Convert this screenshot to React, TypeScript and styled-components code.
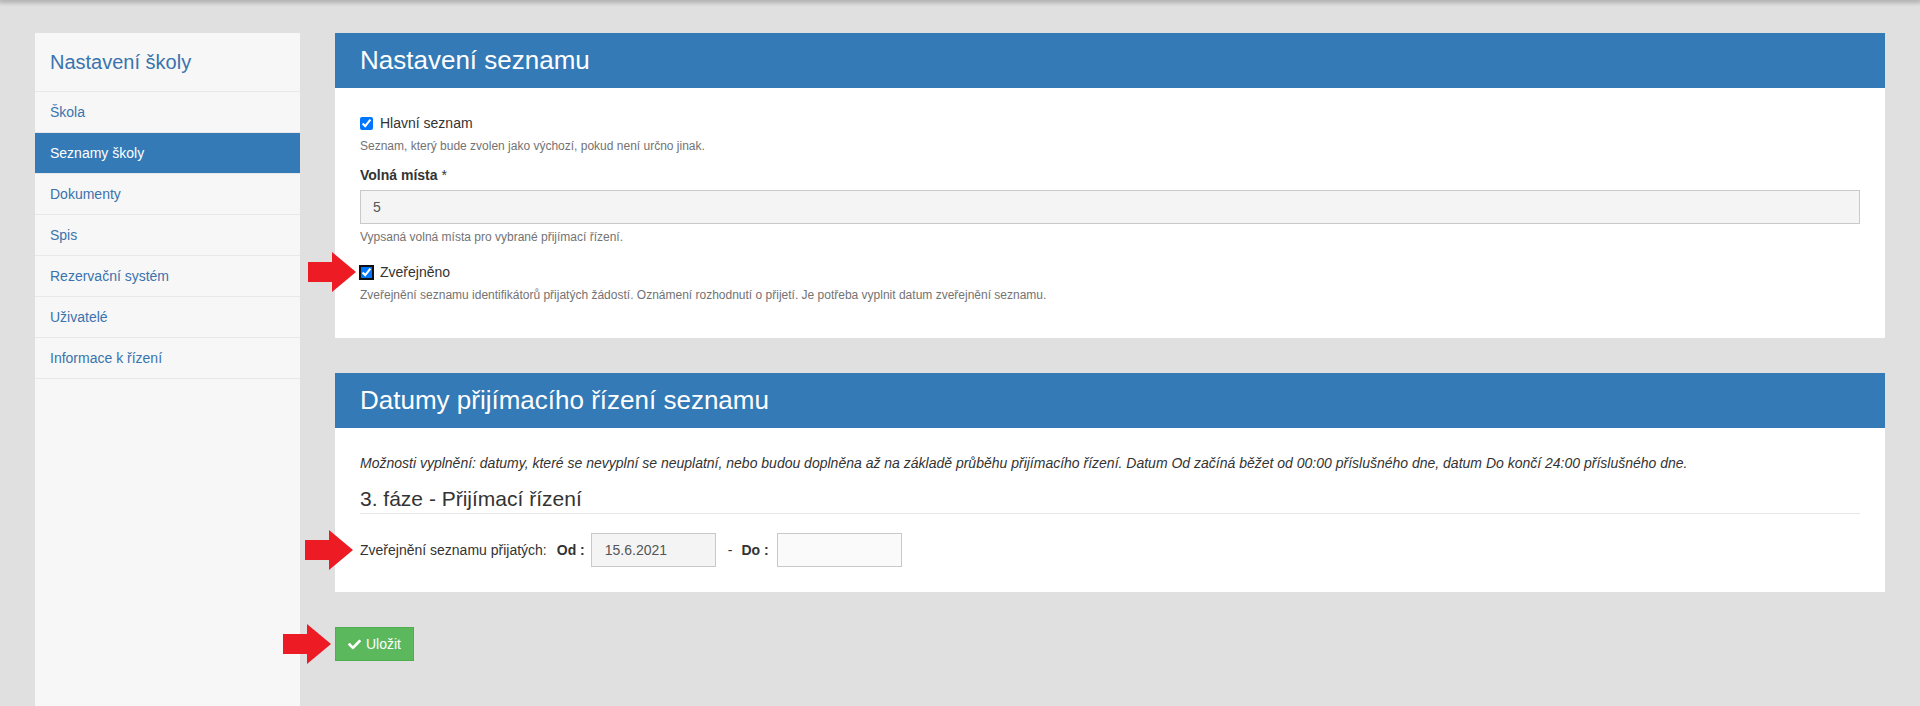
import React from 'react';
import styled, { createGlobalStyle } from 'styled-components';
import { FaCheck } from 'react-icons/fa';

const GlobalStyle = createGlobalStyle`
  html, body {
    margin: 0;
    padding: 0;
  }
  body {
    background: #e0e0e0;
    font-family: "Liberation Sans", Arial, Helvetica, sans-serif;
    font-size: 14px;
    color: #333;
  }
  *, *::before, *::after {
    box-sizing: border-box;
  }
`;

const Shell = styled.div`
  display: flex;
  flex-direction: column;
  min-height: 100vh;
`;

// shadow left by the navbar above the screenshot
const TopShade = styled.div`
  height: 0;
  box-shadow: 0 0 5px 2px rgba(0, 0, 0, 0.32);
`;

const Layout = styled.div`
  flex: 1;
  display: flex;
  gap: 35px;
  padding: 33px 35px 0;
`;

const Sidebar = styled.nav`
  width: 265px;
  flex-shrink: 0;
  background: #f7f7f7;
`;

const SidebarTitle = styled.div`
  height: 59px;
  display: flex;
  align-items: center;
  padding: 0 15px;
  border-bottom: 1px solid #e8e8e8;
  font-size: 20px;
  color: #3a73ad;
`;

const NavItem = styled.a<{ $active?: boolean }>`
  display: flex;
  align-items: center;
  height: 41px;
  padding: 0 15px;
  border-bottom: 1px solid #e8e8e8;
  font-size: 14px;
  text-decoration: none;
  color: ${(p) => (p.$active ? '#fff' : '#3a73ad')};
  background: ${(p) => (p.$active ? '#337ab7' : 'transparent')};
`;

const Main = styled.main`
  flex: 1;
  display: flex;
  flex-direction: column;
  gap: 35px;
`;

const Panel = styled.section`
  background: #fff;
`;

const PanelHeader = styled.h3`
  margin: 0;
  height: 55px;
  line-height: 55px;
  padding: 0 25px;
  background: #337ab7;
  color: #fff;
  font-size: 26px;
  font-weight: normal;
`;

const PanelBody = styled.div`
  padding: 25px;
`;

const CheckRow = styled.label<{ $mt?: number }>`
  position: relative;
  display: flex;
  align-items: center;
  height: 20px;
  margin-top: ${(p) => p.$mt || 0}px;
  font-size: 14px;
  color: #333;
`;

const Checkbox = styled.input<{ $focused?: boolean }>`
  width: 13px;
  height: 13px;
  margin: 0 7px 0 0;
  accent-color: #0075ff;
  ${(p) =>
    p.$focused &&
    `
    outline: 2px solid #111;
    outline-offset: -1px;
    border-radius: 2px;
  `}
`;

const HelpText = styled.div<{ $mb?: number }>`
  margin-top: 5px;
  margin-bottom: ${(p) => p.$mb || 0}px;
  font-size: 12px;
  line-height: 17px;
  color: #737373;
`;

const FieldLabel = styled.div`
  margin-top: 10px;
  margin-bottom: 5px;
  line-height: 20px;
  font-weight: bold;
  color: #333;
`;

const Required = styled.span`
  font-weight: normal;
  color: #333;
`;

const TextInput = styled.input`
  display: block;
  width: 100%;
  height: 34px;
  padding: 0 12px;
  border: 1px solid #c9c9c9;
  border-radius: 0;
  background: #f4f4f4;
  font-family: inherit;
  font-size: 14px;
  color: #555;
`;

const Note = styled.p`
  margin: 0;
  line-height: 20px;
  font-style: italic;
  color: #333;
`;

const PhaseTitle = styled.h4`
  margin: 14px 0 0;
  padding-bottom: 2px;
  border-bottom: 1px solid #e6e6e6;
  font-size: 21px;
  line-height: 24px;
  font-weight: normal;
  color: #333;
`;

const DateRow = styled.div`
  position: relative;
  display: flex;
  align-items: center;
  height: 34px;
  margin-top: 19px;
  color: #333;
`;

const FromKey = styled.b`
  margin-left: 10px;
  margin-right: 6px;
`;

const ToKey = styled.b`
  margin-right: 8px;
`;

const Dash = styled.span`
  margin-left: 12px;
  margin-right: 9px;
`;

const DateInput = styled.input<{ $filled?: boolean }>`
  width: 125px;
  height: 34px;
  padding: 0 13px;
  border: 1px solid #c9c9c9;
  border-radius: 0;
  background: ${(p) => (p.$filled ? '#f4f4f4' : '#fafafa')};
  font-family: inherit;
  font-size: 14px;
  color: #555;
`;

const Actions = styled.div`
  position: relative;
  display: flex;
`;

const SaveButton = styled.button`
  display: flex;
  align-items: center;
  gap: 5px;
  height: 34px;
  padding: 0 12px;
  border: 1px solid #4cae4c;
  border-radius: 0;
  background: #5cb85c;
  color: #fff;
  font-family: inherit;
  font-size: 14px;
`;

const ArrowSvg = styled.svg<{ $left: number }>`
  position: absolute;
  top: 50%;
  left: ${(p) => p.$left}px;
  transform: translateY(-50%);
`;

function Arrow({ left }: { left: number }) {
  return (
    <ArrowSvg $left={left} width="48" height="40" viewBox="0 0 48 40">
      <polygon points="0,10 24,10 24,0 48,20 24,40 24,30 0,30" fill="#ed1c24" />
    </ArrowSvg>
  );
}

const navItems = [
  'Škola',
  'Seznamy školy',
  'Dokumenty',
  'Spis',
  'Rezervační systém',
  'Uživatelé',
  'Informace k řízení',
];

export default function App() {
  return (
    <Shell>
      <GlobalStyle />
      <TopShade />
      <Layout>
        <Sidebar>
          <SidebarTitle>Nastavení školy</SidebarTitle>
          {navItems.map((item) => (
            <NavItem key={item} $active={item === 'Seznamy školy'}>
              {item}
            </NavItem>
          ))}
        </Sidebar>

        <Main>
          <Panel>
            <PanelHeader>Nastavení seznamu</PanelHeader>
            <PanelBody>
              <CheckRow>
                <Checkbox type="checkbox" defaultChecked />
                Hlavní seznam
              </CheckRow>
              <HelpText>Seznam, který bude zvolen jako výchozí, pokud není určno jinak.</HelpText>

              <FieldLabel>
                Volná místa <Required>*</Required>
              </FieldLabel>
              <TextInput defaultValue="5" readOnly />
              <HelpText>Vypsaná volná místa pro vybrané přijímací řízení.</HelpText>

              <CheckRow $mt={16}>
                <Arrow left={-52} />
                <Checkbox type="checkbox" defaultChecked $focused />
                Zveřejněno
              </CheckRow>
              <HelpText $mb={9}>
                Zveřejnění seznamu identifikátorů přijatých žádostí. Oznámení rozhodnutí o přijetí. Je potřeba vyplnit datum zveřejnění seznamu.
              </HelpText>
            </PanelBody>
          </Panel>

          <Panel>
            <PanelHeader>Datumy přijímacího řízení seznamu</PanelHeader>
            <PanelBody>
              <Note>
                Možnosti vyplnění: datumy, které se nevyplní se neuplatní, nebo budou doplněna až na základě průběhu přijímacího řízení. Datum Od začíná běžet od 00:00 příslušného dne, datum Do končí 24:00 příslušného dne.
              </Note>
              <PhaseTitle>3. fáze - Přijímací řízení</PhaseTitle>
              <DateRow>
                <Arrow left={-55} />
                Zveřejnění seznamu přijatých:
                <FromKey>Od :</FromKey>
                <DateInput $filled defaultValue="15.6.2021" readOnly />
                <Dash>-</Dash>
                <ToKey>Do :</ToKey>
                <DateInput />
              </DateRow>
            </PanelBody>
          </Panel>

          <Actions>
            <Arrow left={-52} />
            <SaveButton type="button">
              <FaCheck size={13} />
              Uložit
            </SaveButton>
          </Actions>
        </Main>
      </Layout>
    </Shell>
  );
}
